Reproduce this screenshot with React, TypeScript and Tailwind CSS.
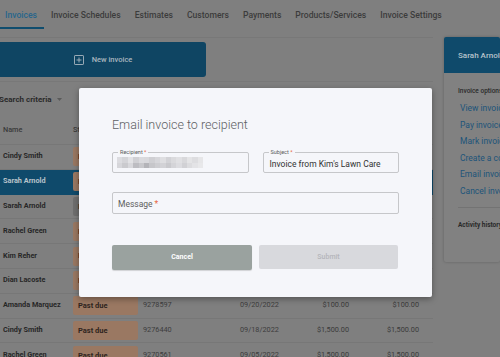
import { ReactNode } from "react";

type Row = {
  name: string;
  status: string;
  tone: "due" | "paid";
  number: string;
  date: string;
  amount: string;
  balance: string;
  selected?: boolean;
};

const tabs = [
  "Invoices",
  "Invoice Schedules",
  "Estimates",
  "Customers",
  "Payments",
  "Products/Services",
  "Invoice Settings",
];

const rows: Row[] = [
  { name: "Cindy Smith", status: "Past due", tone: "due", number: "9291034", date: "10/02/2022", amount: "$250.00", balance: "$250.00" },
  { name: "Sarah Arnold", status: "Past due", tone: "due", number: "9289120", date: "09/28/2022", amount: "$100.00", balance: "$100.00", selected: true },
  { name: "Sarah Arnold", status: "Paid", tone: "paid", number: "9285512", date: "09/27/2022", amount: "$100.00", balance: "$0.00" },
  { name: "Rachel Green", status: "Past due", tone: "due", number: "9283307", date: "09/25/2022", amount: "$1,500.00", balance: "$1,500.00" },
  { name: "Kim Reher", status: "Past due", tone: "due", number: "9281946", date: "09/23/2022", amount: "$100.00", balance: "$100.00" },
  { name: "Dian Lacoste", status: "Past due", tone: "due", number: "9280218", date: "09/21/2022", amount: "$100.00", balance: "$100.00" },
  { name: "Amanda Marquez", status: "Past due", tone: "due", number: "9278597", date: "09/20/2022", amount: "$100.00", balance: "$100.00" },
  { name: "Cindy Smith", status: "Past due", tone: "due", number: "9276440", date: "09/18/2022", amount: "$1,500.00", balance: "$1,500.00" },
  { name: "Rachel Green", status: "Past due", tone: "due", number: "9270561", date: "09/05/2022", amount: "$1,500.00", balance: "$1,500.00" },
];

const invoiceOptions = [
  "View invoice",
  "Pay invoice",
  "Mark invoice as sent",
  "Create a copy",
  "Email invoice",
  "Cancel invoice",
];

// pixelated email address (hidden in the screenshot)
const mosaic = [
  ["#dcdce0", "#d4d4d8", "#e2e2e5", "#d0d0d4", "#dadade", "#d8d8dc", "#cfcfd3", "#d6d6da", "#dedee1", "#d2d2d6", "#dadadd", "#e0e0e3", "#d8d8db", "#e4e4e6", "#dddde0", "#e6e6e8"],
  ["#d6d6da", "#cacace", "#d8d8dc", "#bdbdc2", "#c8c8cc", "#b4b4b9", "#c6c6ca", "#cdcdd1", "#d2d2d6", "#c9c9cd", "#d4d4d8", "#dcdce0", "#d1d1d5", "#dcdcdf", "#e3e3e6", "#e8e8ea"],
];

function OutlinedField({ label, children }: { label: string; children: ReactNode }) {
  return (
    <div className="relative flex-1 h-[21px] rounded-[2px] border border-[#c6c7ca]">
      <span className="absolute left-[5px] top-[-5px] px-[2px] bg-[#f5f6fa] text-[5.5px] leading-[8px] text-[#5b5b5b]">
        {label} <span className="text-[#e8663f]">*</span>
      </span>
      {children}
    </div>
  );
}

function EmailModal() {
  return (
    <div className="absolute left-[79px] top-[88px] w-[353px] h-[209px] rounded-[2px] bg-[#f5f6fa] px-[33px] pt-[29px] shadow-[0_2px_6px_rgba(0,0,0,0.35)]">
      <h2 className="text-[12.5px] leading-[15px] font-light text-[#5d5f64]">
        Email invoice to recipient
      </h2>

      <div className="mt-[20px] flex gap-[14px]">
        <OutlinedField label="Recipient">
          <div className="ml-[4px] mt-[4px] flex flex-col blur-[0.4px]">
            {mosaic.map((line, i) => (
              <div key={i} className="flex">
                {line.map((c, j) => (
                  <span key={j} className="block w-[5.4px] h-[5.5px]" style={{ backgroundColor: c }} />
                ))}
              </div>
            ))}
          </div>
        </OutlinedField>
        <OutlinedField label="Subject">
          <div className="flex h-full items-center pl-[6px] pt-[3px] text-[8.5px] text-[#333333]">
            Invoice from Kim's Lawn Care
          </div>
        </OutlinedField>
      </div>

      <div className="mt-[19px] flex h-[22px] items-center rounded-[2px] border border-[#c6c7ca] pl-[5px] pt-[3px] text-[8.5px] text-[#5e5e5e]">
        Message <span className="ml-[2px] text-[#e8663f]">*</span>
      </div>

      <div className="mt-[31px] flex gap-[7px]">
        <button className="w-[140px] h-[25px] rounded-[2px] bg-[#9aa29f] text-[7px] font-bold text-white shadow-[0_1px_1px_rgba(0,0,0,0.15)]">
          Cancel
        </button>
        <button className="w-[139px] h-[24px] rounded-[2px] bg-[#d8d9dd] text-[7px] font-medium text-[#b4b5ba]">
          Submit
        </button>
      </div>
    </div>
  );
}

function StatusBadge({ row }: { row: Row }) {
  const color = row.tone === "due" ? "bg-[#9a7862] text-[#2f2520]" : "bg-[#6f6f6f] text-[#2b2b2b]";
  return (
    <div className={`flex h-[19px] w-[65px] items-center rounded-[2px] pl-[5px] text-[7.5px] font-bold ${color}`}>
      {row.status}
    </div>
  );
}

export default function App() {
  return (
    <div className="relative w-[500px] h-[357px] overflow-hidden bg-[#7f7f7f] font-[Roboto,sans-serif]">
      {/* tabs */}
      <nav className="flex h-[29px] ml-[-2px]">
        {tabs.map((t, i) => (
          <div
            key={t}
            className={`flex items-center px-[7px] pt-[3px] border-b-2 text-[8.6px] font-medium ${
              i === 0 ? "border-[#0f4d6e] text-[#27668c]" : "border-transparent text-[#3c3c3c]"
            }`}
          >
            {t}
          </div>
        ))}
      </nav>

      <div className="mt-[8px] flex">
        <main className="w-[433px] border-t border-[#787878]">
          <div className="pt-[4px]">
            <button className="flex w-[206px] h-[35px] items-center justify-center gap-[8px] rounded-r-[3px] bg-[#0f4563] text-[7.5px] font-medium text-[#a9b5bf]">
              <svg width="10" height="10" viewBox="0 0 10 10" fill="none" stroke="#a9b5bf" strokeWidth="0.9">
                <rect x="0.5" y="0.5" width="9" height="9" rx="0.6" />
                <path d="M5 2.5v5M2.5 5h5" />
              </svg>
              New invoice
            </button>
          </div>
          <div className="mt-[4px] border-t border-[#787878]" />

          <div className="flex h-[35px] items-center ml-[-1px] gap-[5px] text-[8px] font-bold text-[#2b2b2b]">
            Search criteria
            <svg width="5" height="3" viewBox="0 0 5 3">
              <path d="M0 0h5L2.5 3z" fill="#5a5a5a" />
            </svg>
          </div>

          <div className="flex h-[28px] items-center border-b border-[#777777] text-[7.3px] font-medium text-[#3a3a3a]">
            <div className="w-[73px] pl-[3px]">Name</div>
            <div className="w-[65px]">Status</div>
            <div className="w-[102px] pl-[5px]">Number</div>
            <div className="w-[60px]">Date</div>
            <div className="w-[49px] text-right">Amount</div>
            <div className="w-[70px] text-right">Balance</div>
          </div>

          {rows.map((r, i) => (
            <div
              key={i}
              className={`flex h-[24.8px] items-center border-b text-[7.3px] ${
                r.selected ? "bg-[#0f4a6b] border-[#0f4a6b]" : "border-[#777777]"
              }`}
            >
              <div className={`w-[73px] pl-[3px] font-bold ${r.selected ? "text-[#b9c3ca]" : "text-[#272727]"}`}>
                {r.name}
              </div>
              <StatusBadge row={r} />
              <div className="w-[102px] pl-[5px] text-[#3d3d3d]">{r.number}</div>
              <div className="w-[60px] text-[#3d3d3d]">{r.date}</div>
              <div className="w-[49px] text-right text-[#3a3a3a]">{r.amount}</div>
              <div className="w-[70px] text-right text-[#3a3a3a]">{r.balance}</div>
            </div>
          ))}
        </main>

        {/* selected customer panel */}
        <aside className="ml-[11px] flex-1 h-[225px] rounded-[2px] bg-[#818181] shadow-[0_0_3px_rgba(0,0,0,0.25)] overflow-hidden">
          <div className="flex h-[36px] items-center bg-[#0f4a6b] pl-[14px] pt-[1px] text-[8px] font-medium text-[#b8c3cb] whitespace-nowrap">
            Sarah Arnold
          </div>
          <div className="pl-[14px] pt-[14px] whitespace-nowrap">
            <div className="text-[6.5px] leading-[9px] font-medium text-[#2a2a2a]">Invoice options</div>
            <ul className="mt-[4px] pl-[2px]">
              {invoiceOptions.map((o) => (
                <li key={o} className="h-[16.6px] leading-[16.6px] text-[8.5px] text-[#20547a]">
                  {o}
                </li>
              ))}
            </ul>
            <div className="mt-[7px] border-t border-[#737373]" />
            <div className="mt-[13px] text-[6.5px] leading-[9px] font-bold text-[#2a2a2a]">Activity history</div>
          </div>
        </aside>
      </div>

      <EmailModal />
    </div>
  );
}
